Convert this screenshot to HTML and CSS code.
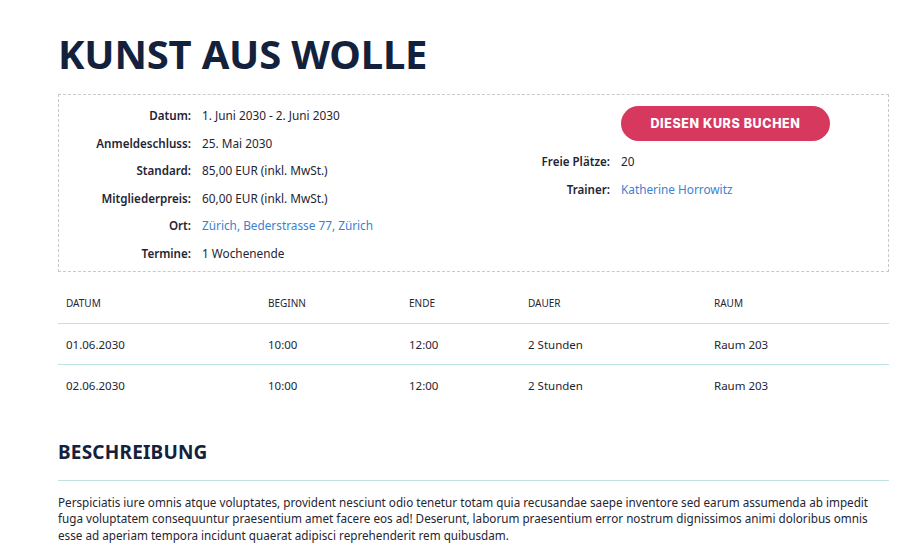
FILE: index.html
```html
<!DOCTYPE html>
<html lang="de">
<head>
<meta charset="utf-8">
<title>Kunst aus Wolle</title>
<link rel="stylesheet" href="styles.css">
</head>
<body>
<main class="page">
  <h1 class="title">KUNST AUS WOLLE</h1>

  <section class="info">
    <dl class="facts">
      <dt>Datum:</dt><dd>1. Juni 2030 - 2. Juni 2030</dd>
      <dt>Anmeldeschluss:</dt><dd>25. Mai 2030</dd>
      <dt>Standard:</dt><dd>85,00 EUR (inkl. MwSt.)</dd>
      <dt>Mitgliederpreis:</dt><dd>60,00 EUR (inkl. MwSt.)</dd>
      <dt>Ort:</dt><dd><a href="#">Zürich, Bederstrasse 77, Zürich</a></dd>
      <dt>Termine:</dt><dd>1 Wochenende</dd>
    </dl>
    <div class="side">
      <div class="book-row"><a class="book" href="#">DIESEN KURS BUCHEN</a></div>
      <dl class="facts side-facts">
        <dt>Freie Plätze:</dt><dd>20</dd>
        <dt>Trainer:</dt><dd><a href="#">Katherine Horrowitz</a></dd>
      </dl>
    </div>
  </section>

  <table class="dates">
    <colgroup>
      <col class="c1"><col class="c2"><col class="c3"><col class="c4"><col>
    </colgroup>
    <thead>
      <tr><th>DATUM</th><th>BEGINN</th><th>ENDE</th><th>DAUER</th><th>RAUM</th></tr>
    </thead>
    <tbody>
      <tr><td>01.06.2030</td><td>10:00</td><td>12:00</td><td>2 Stunden</td><td>Raum 203</td></tr>
      <tr><td>02.06.2030</td><td>10:00</td><td>12:00</td><td>2 Stunden</td><td>Raum 203</td></tr>
    </tbody>
  </table>

  <h2 class="section-title">BESCHREIBUNG</h2>
  <p class="desc">Perspiciatis iure omnis atque voluptates, provident nesciunt odio tenetur totam quia recusandae saepe inventore sed earum assumenda ab impedit fuga voluptatem consequuntur praesentium amet facere eos ad! Deserunt, laborum praesentium error nostrum dignissimos animi doloribus omnis esse ad aperiam tempora incidunt quaerat adipisci reprehenderit rem quibusdam.</p>
</main>
</body>
</html>
```

FILE: styles.css
```css
* { box-sizing: border-box; }

body {
  margin: 0;
  background: #fff;
  color: #1f2533;
  font-family: "Noto Sans", "Open Sans", sans-serif;
  font-size: 11.8px;
}

.page {
  width: 831px;
  margin-left: 58px;
  padding-top: 28px;
}

.title {
  margin: 0 0 14px;
  font-size: 40px;
  line-height: 52px;
  font-weight: 700;
  color: #14213d;
  letter-spacing: -0.2px;
}

.info {
  border: 1px dashed #c9c9c9;
  display: grid;
  grid-template-columns: 414px 1fr;
  padding: 7px 0 3px 8px;
}

.facts {
  margin: 0;
  display: grid;
  grid-template-columns: 124px auto;
  column-gap: 11px;
  line-height: 27.6px;
  align-content: start;
}

.facts dt {
  text-align: right;
  font-weight: 600;
  font-size: 11.6px;
  color: #1f2533;
}

.facts dd {
  margin: 0;
}

.facts a, .side a:not(.book) {
  color: #3b82d0;
  text-decoration: none;
}

.side {
  display: flex;
  flex-direction: column;
}

.book-row {
  padding: 4px 0 7px 140px;
}

.book {
  display: inline-block;
  width: 209px;
  height: 35px;
  line-height: 35px;
  border-radius: 18px;
  background: #d7385e;
  color: #fff;
  text-align: center;
  text-decoration: none;
  font-family: Inter, "Open Sans", sans-serif;
  font-weight: 800;
  font-size: 12.5px;
  letter-spacing: 0.6px;
}

.side-facts {
  grid-template-columns: 129px auto;
}

.dates {
  width: 100%;
  table-layout: fixed;
  border-collapse: collapse;
  margin-top: 12px;
}

.dates .c1 { width: 202px; }
.dates .c2 { width: 141px; }
.dates .c3 { width: 119px; }
.dates .c4 { width: 186px; }

.dates th, .dates td {
  text-align: left;
  padding: 0 8px;
  font-size: 11.5px;
}

.dates th {
  font-weight: 400;
  font-size: 10px;
  height: 40px;
  border-bottom: 1px solid #bfe3e3;
  color: #1f2533;
}

.dates td {
  height: 41px;
}

.dates tbody tr:first-child td {
  border-bottom: 1px solid #bfe3e3;
}

.section-title {
  margin: 34px 0 0;
  font-size: 19px;
  line-height: 24px;
  font-weight: 700;
  color: #14213d;
  letter-spacing: 0.2px;
  padding-bottom: 16px;
  border-bottom: 1px solid #bfe3e3;
}

.desc {
  margin: 13px 0 0;
  font-size: 11.7px;
  line-height: 16.5px;
}
```
